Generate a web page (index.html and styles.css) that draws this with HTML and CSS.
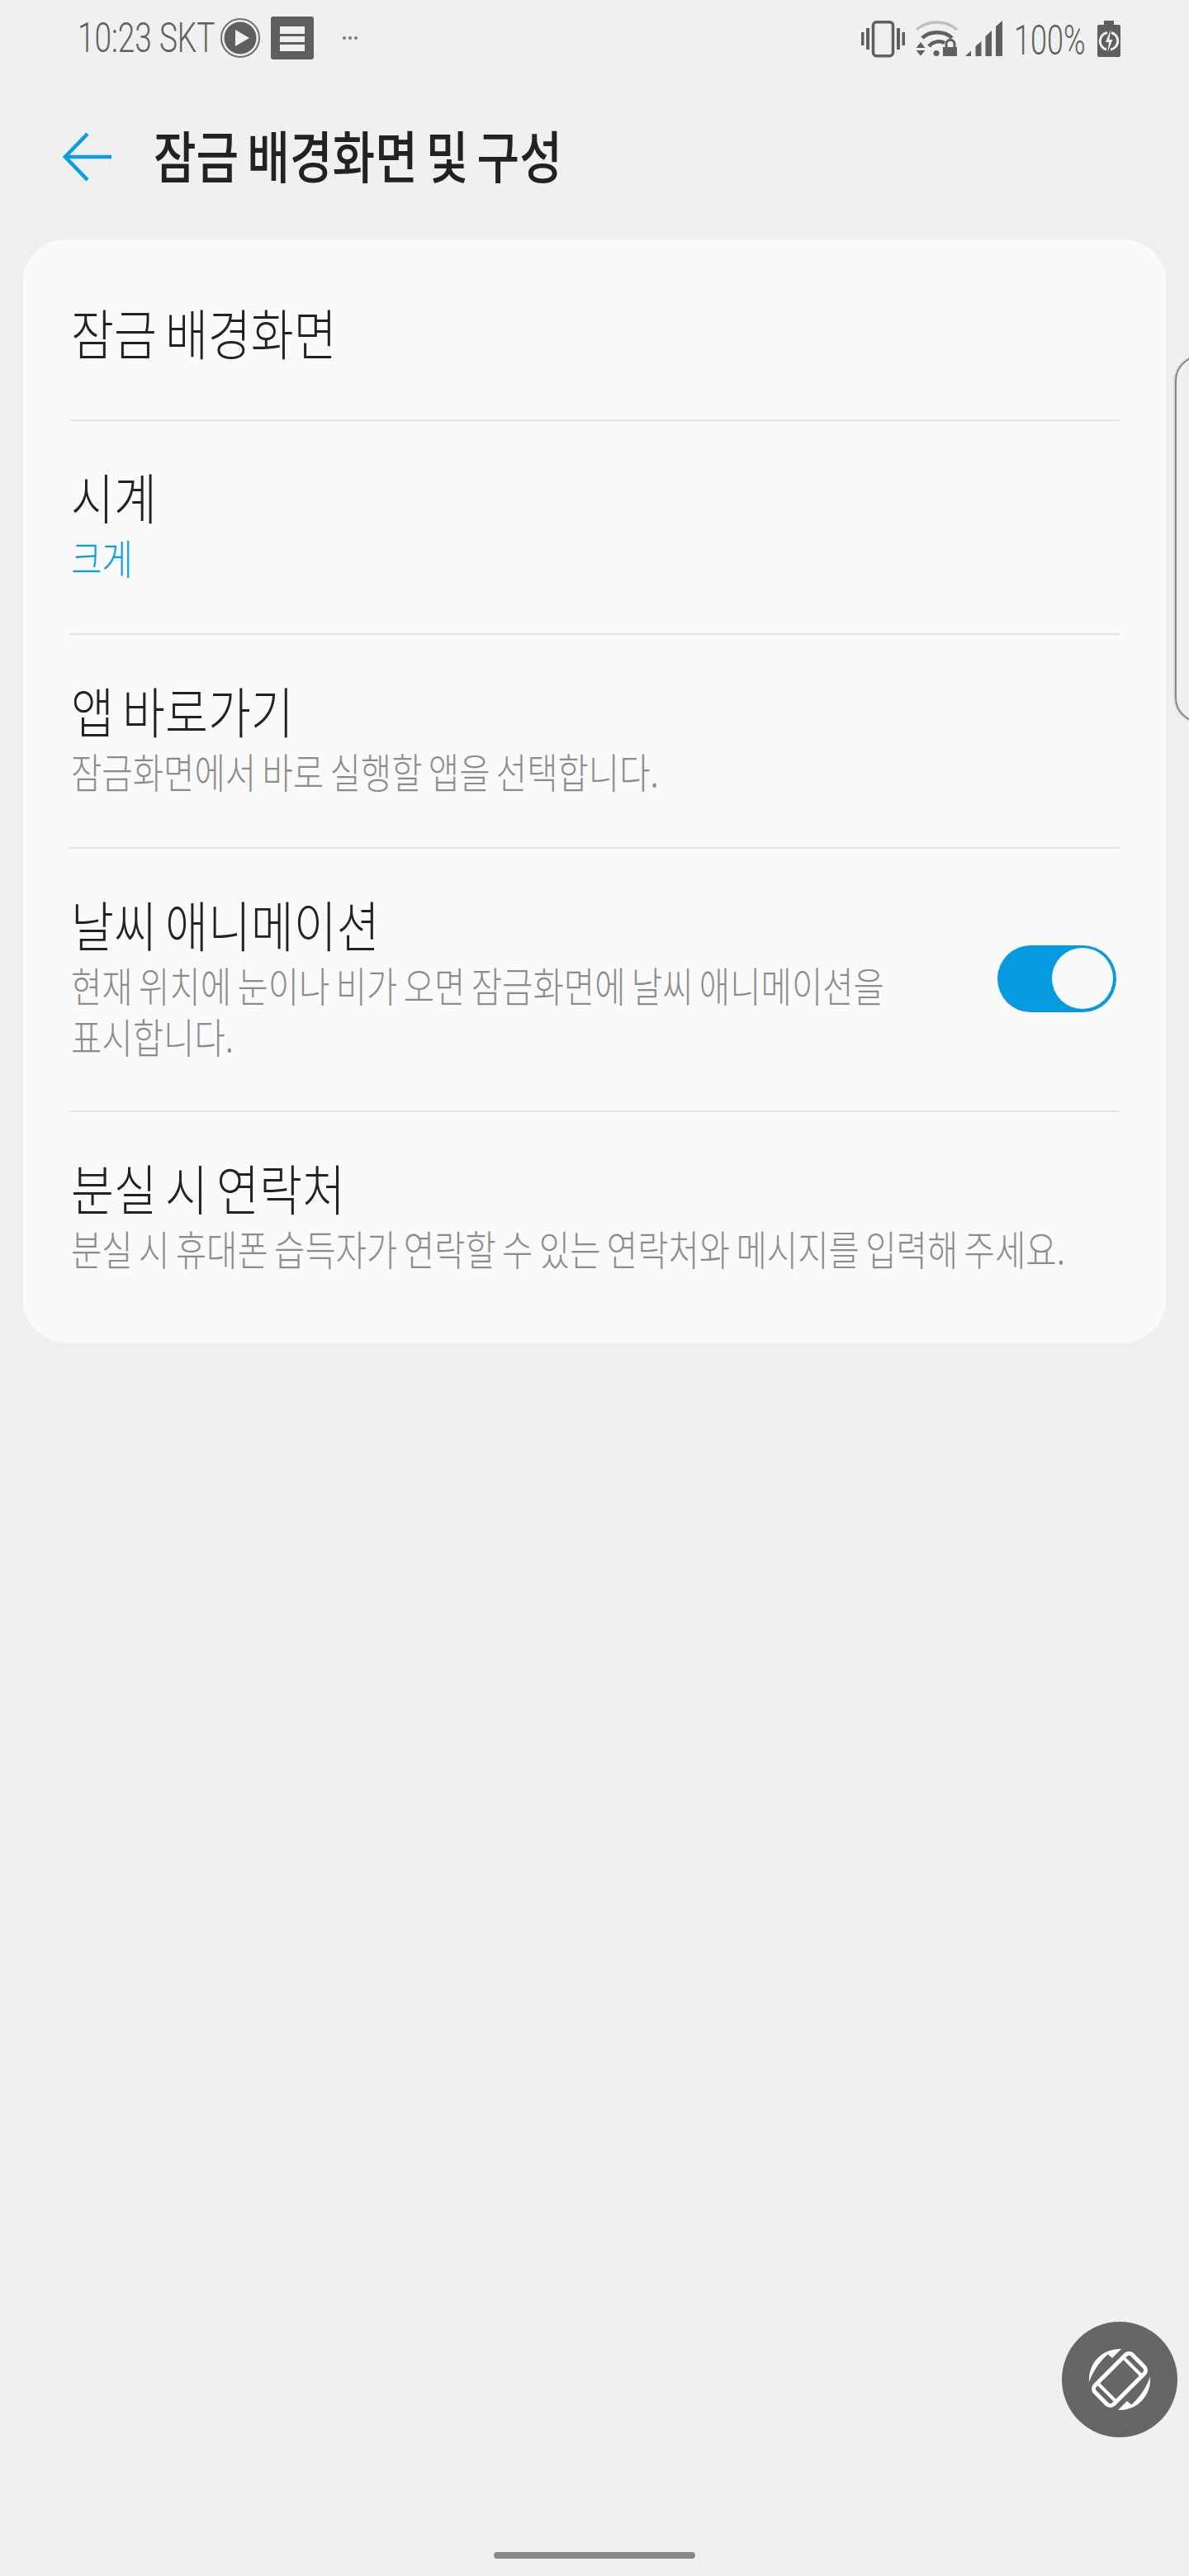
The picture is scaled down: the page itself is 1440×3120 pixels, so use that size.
FILE: index.html
```html
<!DOCTYPE html>
<html lang="ko">

<head>
    <meta charset="UTF-8">
    <meta name="viewport" content="width=device-width, initial-scale=1.0">
    <title>잠금 배경화면 및 구성</title>
    <link rel="stylesheet" href="styles.css">
</head>

<body>

    <!-- Status bar -->
    <div class="status-bar">
        <div class="status-left">
            <span class="status-text status-clock">10:23 SKT</span>
            <svg class="icon-play" width="48" height="48" viewBox="0 0 48 48">
                <circle cx="24" cy="24" r="23" fill="none" stroke="#707070" stroke-width="2"/>
                <circle cx="24" cy="24" r="19.500" fill="#5f5f5f"/>
                <path d="M18 14 L35 24 L18 34 Z" fill="#f0f0f0"/>
            </svg>
            <svg class="icon-doc" width="52" height="52" viewBox="0 0 52 52">
                <rect width="52" height="52" rx="3" fill="#5f5f5f"/>
                <path d="M11 12 H41 V21 H11 Z M11 24 H41 V31 H11 Z M11 34 H41 V42 H11 Z" fill="#f0f0f0"/>
            </svg>
            <span class="status-dots"><i></i><i></i><i></i></span>
        </div>
        <div class="status-right">
            <svg width="53" height="46" viewBox="0 0 53 46">
                <rect x="14.500" y="1.750" width="24" height="41" rx="4" fill="none" stroke="#5f5f5f" stroke-width="3.500"/>
                <path d="M0 14 H3.500 V30 H0 Z M6 9 H10 V35 H6 Z M43 9 H47 V35 H43 Z M49.500 14 H53 V30 H49.500 Z" fill="#5f5f5f"/>
            </svg>
            <svg class="icon-wifi" width="51" height="46" viewBox="0 0 51 46">
                <path d="M1 11 C14 -1 37 -1 50 11" fill="none" stroke="#c0c0c0" stroke-width="3.500"/>
                <path d="M8 21 C17 12 35 12 44 21" fill="none" stroke="#5f5f5f" stroke-width="4.500"/>
                <path d="M16 31 C21 25 29 24 35 27" fill="none" stroke="#5f5f5f" stroke-width="4.500"/>
                <circle cx="25" cy="39.500" r="3.500" fill="#5f5f5f"/>
                <path d="M0.500 33 L6 26 L11.500 33 Z M0.500 36 H11.500 L6 42.500 Z" fill="#5f5f5f"/>
                <path d="M33 32 H50 V43 H33 Z" fill="#5f5f5f"/>
                <path d="M37 32 V28 C37 22 47 22 47 28 V32" fill="none" stroke="#5f5f5f" stroke-width="3"/>
            </svg>
            <svg class="icon-signal" width="45" height="46" viewBox="0 0 45 46">
                <path d="M0 43 L7 36.500 V43 Z M12.500 43 V31 L19.500 25 V43 Z M24.500 43 V19 L32 12 V43 Z M37 43 V7 L45 0 V43 Z" fill="#5f5f5f"/>
            </svg>
            <span class="status-text status-battery">100%</span>
            <svg class="icon-battery" width="28" height="46" viewBox="0 0 28 46">
                <path d="M8 0 H20 V5 H26 Q28 5 28 7 V42 Q28 44 26 44 H2 Q0 44 0 42 V7 Q0 5 2 5 H8 Z" fill="#5f5f5f"/>
                <path d="M12 14.500 A10.500 10.500 0 0 0 11 35 M16 35 A10.500 10.500 0 0 0 17 14.500" fill="none" stroke="#f0f0f0" stroke-width="3"/>
                <path d="M16 11 L10 26 H14 L12.500 38 L18.500 23 H14.500 Z" fill="#f0f0f0"/>
            </svg>
        </div>
    </div>

    <!-- Title bar -->
    <header class="title-bar">
        <svg class="back-arrow" width="60" height="60" viewBox="0 0 60 60">
            <path d="M59 30 H3 M30 2 L3 30 L30 58" fill="none" stroke="#089ee3" stroke-width="4.500"/>
        </svg>
        <h1>잠금 배경화면 및 구성</h1>
    </header>

    <!-- Settings list -->
    <main class="card">
        <div class="row row-single">
            <div class="row-title">잠금 배경화면</div>
        </div>
        <div class="row">
            <div class="row-title">시계</div>
            <div class="row-sub row-sub-blue">크게</div>
        </div>
        <div class="row">
            <div class="row-title">앱 바로가기</div>
            <div class="row-sub">잠금화면에서 바로 실행할 앱을 선택합니다.</div>
        </div>
        <div class="row row-toggle">
            <div class="row-text">
                <div class="row-title">날씨 애니메이션</div>
                <div class="row-sub">현재 위치에 눈이나 비가 오면 잠금화면에 날씨 애니메이션을<br>표시합니다.</div>
            </div>
            <div class="toggle"><span class="toggle-knob"></span></div>
        </div>
        <div class="row row-last">
            <div class="row-title">분실 시 연락처</div>
            <div class="row-sub">분실 시 휴대폰 습득자가 연락할 수 있는 연락처와 메시지를 입력해 주세요.</div>
        </div>
    </main>

    <!-- Edge panel handle, rotate button, home bar -->
    <div class="edge-handle"></div>
    <button class="rotate-btn">
        <svg width="76" height="76" viewBox="0 0 76 76">
            <g transform="rotate(45 38 38)">
                <rect x="22" y="6" width="32" height="64" rx="6" fill="none" stroke="#fff" stroke-width="5"/>
                <path d="M22 16 H54 M22 60 H54" stroke="#fff" stroke-width="4"/>
            </g>
            <path d="M1 41 A37 37 0 0 1 40 1 L29 12 L24 7.500 C17 13 7 25 1 41 Z" fill="#fff"/>
            <path d="M1 41 A37 37 0 0 1 40 1 L29 12 L24 7.500 C17 13 7 25 1 41 Z" fill="#fff" transform="rotate(180 38 38)"/>
        </svg>
    </button>
    <div class="home-bar"></div>

</body>

</html>
```

FILE: styles.css
```css
* {
    box-sizing: border-box;
}

body {
    position: relative;
    width: 1440px;
    height: 3120px;
    margin: 0;
    overflow: hidden;
    background-color: #f0f0f0;
    color: #222;
    font-family: "Noto Sans CJK KR", "Noto Sans", sans-serif;
}

/* Status bar */
.status-bar {
    display: flex;
    justify-content: space-between;
    height: 90px;
    padding: 20px 83px 0 94px;
}

.status-left,
.status-right {
    display: flex;
    align-items: flex-start;
}

.status-text {
    display: inline-block;
    font-family: Roboto, sans-serif;
    font-weight: 300;
    font-size: 50px;
    line-height: 52px;
    color: #5f5f5f;
    white-space: nowrap;
}

.status-clock {
    width: 164px;
    transform: scaleX(.74);
    transform-origin: left;
}

.icon-play {
    margin: 2px 0 0 9px;
}

.icon-doc {
    margin-left: 13px;
}

.status-dots {
    display: flex;
    gap: 3px;
    margin: 24px 0 0 35px;
}

.status-dots i {
    width: 4px;
    height: 4px;
    border-radius: 50%;
    background-color: #777;
}

.status-right {
    padding-top: 5px;
}

.icon-wifi {
    margin-left: 13px;
}

.icon-signal {
    margin-left: 9px;
}

.status-battery {
    width: 83px;
    margin: -2px 0 0 14px;
    transform: scaleX(.72);
    transform-origin: left;
}

.icon-battery {
    margin-left: 18px;
}

/* Title bar */
.title-bar {
    display: flex;
    align-items: center;
    height: 200px;
    padding: 0 0 0 76px;
}

.back-arrow {
    flex-shrink: 0;
}

h1 {
    margin: 0 0 6px 50px;
    font-size: 68px;
    font-weight: 500;
    line-height: 80px;
    word-spacing: -.1em;
    white-space: nowrap;
    transform: scaleX(.825);
    transform-origin: left;
}

/* Settings card */
.card {
    margin: 0 28px;
    padding: 0 56px 20px;
    background-color: #fafafa;
    border-radius: 52px;
}

.row {
    padding: 47px 0 62px;
    border-bottom: 2px solid #e6e6e6;
}

.row-single {
    display: flex;
    align-items: center;
    height: 220px;
    padding: 4px 0 0;
}

.row-toggle {
    display: flex;
    justify-content: space-between;
    align-items: flex-start;
    padding-bottom: 60px;
}

.row-text {
    flex: 1;
    min-width: 0;
}

.row-last {
    padding-bottom: 64px;
    border-bottom: none;
}

.row-title {
    margin-left: 2px;
    font-size: 66px;
    font-weight: 300;
    line-height: 86px;
    word-spacing: -.1em;
    white-space: nowrap;
    transform: scaleX(.855);
    transform-origin: left;
}

.row-sub {
    margin-left: 2px;
    font-size: 50px;
    font-weight: 300;
    line-height: 62px;
    color: #8c8c8c;
    word-spacing: -.1em;
    white-space: nowrap;
    transform: scaleX(.812);
    transform-origin: left;
}

.row-sub-blue {
    color: #089ee3;
}

/* Toggle switch */
.toggle {
    position: relative;
    flex-shrink: 0;
    width: 144px;
    height: 81px;
    margin: 70px 4px 0 0;
    background-color: #069ae0;
    border-radius: 41px;
}

.toggle-knob {
    position: absolute;
    top: 3px;
    right: 4px;
    width: 74px;
    height: 74px;
    background-color: #fafafa;
    border-radius: 50%;
}

/* Overlays */
.edge-handle {
    position: absolute;
    top: 431px;
    left: 1423px;
    width: 60px;
    height: 444px;
    border: 2px solid #8a8a8a;
    border-radius: 50px;
    box-shadow: -1px 0 2px rgba(0, 0, 0, .2);
}

.rotate-btn {
    position: absolute;
    top: 2812px;
    left: 1286px;
    display: flex;
    align-items: center;
    justify-content: center;
    width: 140px;
    height: 140px;
    padding: 0;
    background-color: #666;
    border: none;
    border-radius: 50%;
}

.home-bar {
    position: absolute;
    top: 3091px;
    left: 598px;
    width: 244px;
    height: 8px;
    background-color: #888;
    border-radius: 4px;
}
```
